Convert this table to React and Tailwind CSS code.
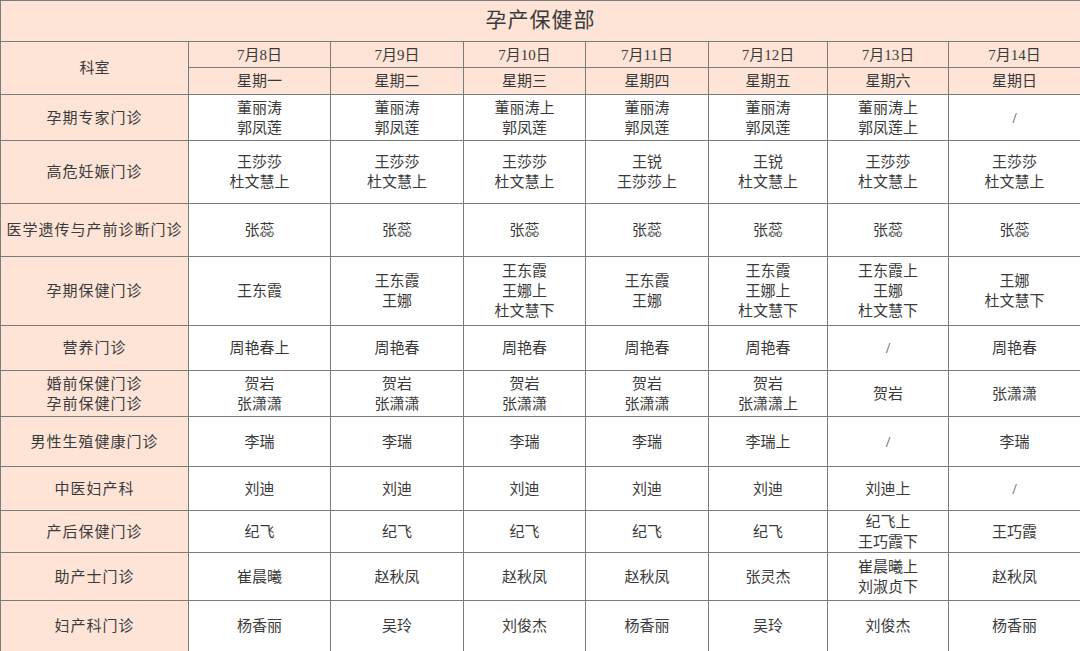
const dates = ['7月8日', '7月9日', '7月10日', '7月11日', '7月12日', '7月13日', '7月14日'];
const weekdays = ['星期一', '星期二', '星期三', '星期四', '星期五', '星期六', '星期日'];
const colWidths = [188, 142, 133, 122, 123, 119, 121, 132];

const rows = [
  { name: ['孕期专家门诊'], h: 46, cells: [['董丽涛', '郭凤莲'], ['董丽涛', '郭凤莲'], ['董丽涛上', '郭凤莲'], ['董丽涛', '郭凤莲'], ['董丽涛', '郭凤莲'], ['董丽涛上', '郭凤莲上'], ['/']] },
  { name: ['高危妊娠门诊'], h: 63, cells: [['王莎莎', '杜文慧上'], ['王莎莎', '杜文慧上'], ['王莎莎', '杜文慧上'], ['王锐', '王莎莎上'], ['王锐', '杜文慧上'], ['王莎莎', '杜文慧上'], ['王莎莎', '杜文慧上']] },
  { name: ['医学遗传与产前诊断门诊'], h: 53, cells: [['张蕊'], ['张蕊'], ['张蕊'], ['张蕊'], ['张蕊'], ['张蕊'], ['张蕊']] },
  { name: ['孕期保健门诊'], h: 69, cells: [['王东霞'], ['王东霞', '王娜'], ['王东霞', '王娜上', '杜文慧下'], ['王东霞', '王娜'], ['王东霞', '王娜上', '杜文慧下'], ['王东霞上', '王娜', '杜文慧下'], ['王娜', '杜文慧下']] },
  { name: ['营养门诊'], h: 45, cells: [['周艳春上'], ['周艳春'], ['周艳春'], ['周艳春'], ['周艳春'], ['/'], ['周艳春']] },
  { name: ['婚前保健门诊', '孕前保健门诊'], h: 46, cells: [['贺岩', '张潇潇'], ['贺岩', '张潇潇'], ['贺岩', '张潇潇'], ['贺岩', '张潇潇'], ['贺岩', '张潇潇上'], ['贺岩'], ['张潇潇']] },
  { name: ['男性生殖健康门诊'], h: 50, cells: [['李瑞'], ['李瑞'], ['李瑞'], ['李瑞'], ['李瑞上'], ['/'], ['李瑞']] },
  { name: ['中医妇产科'], h: 44, cells: [['刘迪'], ['刘迪'], ['刘迪'], ['刘迪'], ['刘迪'], ['刘迪上'], ['/']] },
  { name: ['产后保健门诊'], h: 42, cells: [['纪飞'], ['纪飞'], ['纪飞'], ['纪飞'], ['纪飞'], ['纪飞上', '王巧霞下'], ['王巧霞']] },
  { name: ['助产士门诊'], h: 48, cells: [['崔晨曦'], ['赵秋凤'], ['赵秋凤'], ['赵秋凤'], ['张灵杰'], ['崔晨曦上', '刘淑贞下'], ['赵秋凤']] },
  { name: ['妇产科门诊'], h: 51, cells: [['杨香丽'], ['吴玲'], ['刘俊杰'], ['杨香丽'], ['吴玲'], ['刘俊杰'], ['杨香丽']] },
];

const cell = 'border border-[#7b7b7b] text-center align-middle p-0';
const peach = 'bg-[#fde4d7]';

function Lines({ lines, tracking }) {
  return (
    <div className={`leading-[20px] ${tracking ? 'tracking-[1px]' : ''}`}>
      {lines.map((l, i) => (
        <div key={i}>{l}</div>
      ))}
    </div>
  );
}

export default function App() {
  return (
    <div
      className="w-[1080px] h-[651px] overflow-hidden bg-white text-[#3a3a3a] text-[15px]"
      style={{ fontFamily: '"Liberation Serif", "Noto Sans CJK SC", serif' }}
    >
      <table className="table-fixed border-collapse w-[1080px]">
        <colgroup>
          {colWidths.map((w, i) => (
            <col key={i} style={{ width: w }} />
          ))}
        </colgroup>
        <tbody>
          <tr className="h-[41px]">
            <td colSpan={8} className={`${cell} ${peach} text-[21px] tracking-[1px]`}>孕产保健部</td>
          </tr>
          <tr className="h-[26px]">
            <td rowSpan={2} className={`${cell} ${peach}`}>科室</td>
            {dates.map((d) => (
              <td key={d} className={`${cell} ${peach} leading-[18px]`}>{d}</td>
            ))}
          </tr>
          <tr className="h-[27px]">
            {weekdays.map((w) => (
              <td key={w} className={`${cell} ${peach}`}>{w}</td>
            ))}
          </tr>
          {rows.map((r, ri) => (
            <tr key={ri} style={{ height: r.h }}>
              <td className={`${cell} ${peach}`}>
                <Lines lines={r.name} tracking />
              </td>
              {r.cells.map((c, ci) => (
                <td key={ci} className={cell}>
                  <Lines lines={c} />
                </td>
              ))}
            </tr>
          ))}
        </tbody>
      </table>
    </div>
  );
}
